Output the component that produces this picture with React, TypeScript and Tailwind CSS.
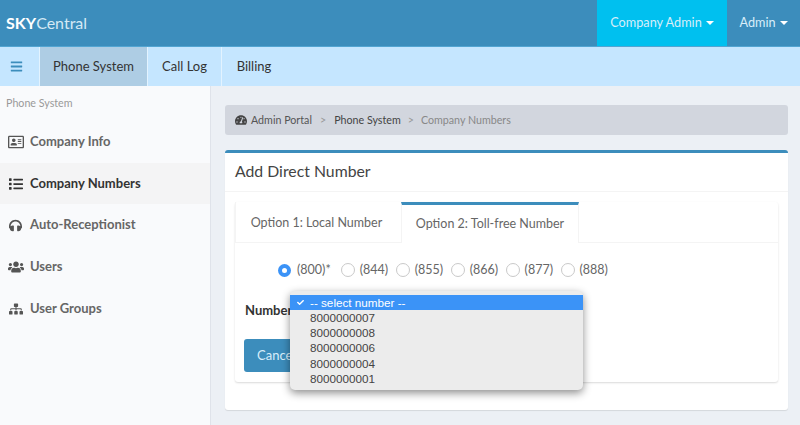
import { FaHeadphones, FaList, FaRegAddressCard, FaSitemap, FaTachometerAlt, FaUsers, FaBars, FaCheck } from "react-icons/fa"

const sideItems = [
  { label: "Company Info", icon: <FaRegAddressCard className="text-[16px]" /> },
  { label: "Company Numbers", icon: <FaList className="text-[14px]" />, active: true },
  { label: "Auto-Receptionist", icon: <FaHeadphones className="text-[13px]" /> },
  { label: "Users", icon: <FaUsers className="text-[16px]" /> },
  { label: "User Groups", icon: <FaSitemap className="text-[14px]" /> },
]

const codes = ["(800)*", "(844)", "(855)", "(866)", "(877)", "(888)"]
const numbers = ["8000000007", "8000000008", "8000000006", "8000000004", "8000000001"]

function Caret() {
  return <span className="ml-1 inline-block border-x-[4px] border-t-[4px] border-x-transparent border-t-white align-middle" />
}

export default function App() {
  return (
    <div className="flex h-[425px] w-[800px] flex-col overflow-hidden bg-[#ecf0f5] font-['Lato',sans-serif] text-[13px] text-[#444]">
      {/* Top bar */}
      <div className="flex h-[47px] shrink-0 items-stretch justify-between border-b border-[#52a5d2] bg-[#3c8dbc] text-[#d8eefa]">
        <div className="pl-[6px] pt-[12px] text-[16px] leading-[22px] text-[#d5e9f5]">
          <b className="text-white">SKY</b>Central
        </div>
        <div className="flex">
          <div className="flex w-[130px] items-center justify-center bg-[#00c0ef] pb-[1px] text-[12.7px]">
            Company Admin <Caret />
          </div>
          <div className="flex w-[73px] items-center justify-center pb-[1px] text-[12.7px]">
            Admin <Caret />
          </div>
        </div>
      </div>

      {/* Sub nav */}
      <div className="flex h-[39px] shrink-0 items-stretch bg-[#c5e6ff] text-[13px] text-[#333]">
        <div className="flex w-[40px] items-center justify-center border-r border-[#e3f3ff] pr-[6px] text-[#3c8dbc]">
          <FaBars className="text-[13px]" />
        </div>
        <div className="flex w-[108px] items-center justify-center border-r border-[#e3f3ff] bg-[#aecde4]">Phone System</div>
        <div className="flex w-[74px] items-center justify-center border-r border-[#e3f3ff]">Call Log</div>
        <div className="flex w-[64px] items-center justify-center">Billing</div>
      </div>

      <div className="flex min-h-0 flex-1">
        {/* Sidebar */}
        <div className="w-[211px] shrink-0 border-r border-[#dfe3ea] bg-[#f9fafc]">
          <div className="px-[6px] pb-[11px] pt-[9px] text-[10.7px] leading-[15px] text-[#999]">Phone System</div>
          {sideItems.map((item) => (
            <div
              key={item.label}
              className={`flex h-[41.7px] items-center text-[13px] font-bold ${item.active ? "bg-[#f4f4f5] text-[#333]" : "text-[#666]"}`}
            >
              <span className={`flex w-[30px] items-center justify-center pl-[1px] ${item.active ? "text-[#333]" : "text-[#555]"}`}>{item.icon}</span>
              {item.label}
            </div>
          ))}
        </div>

        {/* Main */}
        <div className="min-w-0 flex-1 pl-[14px] pr-[12px] pt-[19px]">
          <div className="flex h-[30px] items-center rounded-[3px] bg-[#d2d6de] px-[10px] text-[10.7px] text-[#555]">
            <FaTachometerAlt className="mr-[4px] text-[12px] text-[#444]" />
            Admin Portal
            <span className="mx-[8px] text-[#999]">&gt;</span>
            <span className="text-[#444]">Phone System</span>
            <span className="mx-[7px] text-[#999]">&gt;</span>
            <span className="text-[#888]">Company Numbers</span>
          </div>

          <div className="mt-[15px] h-[260px] rounded-[3px] border-t-[3px] border-[#3c8dbc] bg-white shadow-[0_1px_1px_rgba(0,0,0,0.1)]">
            <div className="border-b border-[#f4f4f4] px-[10px] pb-[10px] pt-[7px] text-[15.8px] leading-[21px] text-[#444]">Add Direct Number</div>

            <div className="mx-[10px] mt-[10px] h-[180px] rounded-[3px] bg-white shadow-[0_1px_2px_rgba(0,0,0,0.15)]">
              {/* Tabs */}
              <div className="flex h-[41px] items-stretch border-b border-[#f4f4f4] text-[12.5px] text-[#666]">
                <div className="flex w-[166px] items-center justify-center border-l border-[#f4f4f4] pr-[4px] pt-[3px]">Option 1: Local Number</div>
                <div className="-mb-px flex w-[178px] items-center justify-center border-x border-t-[3px] border-x-[#f4f4f4] border-t-[#3c8dbc] bg-white">Option 2: Toll-free Number</div>
              </div>

              <div className="relative">
                {/* Radios */}
                <div className="flex items-center pl-[43px] pt-[20px] text-[12.5px] leading-[14px] text-[#666]">
                  {codes.map((code, i) => (
                    <div key={code} className={`flex items-center ${i === 0 ? "mr-[10px]" : "mr-[7.5px]"}`}>
                      {i === 0 ? (
                        <span className="flex h-[13px] w-[13px] items-center justify-center rounded-full bg-[#3b93f7]">
                          <span className="h-[5px] w-[5px] rounded-full bg-white" />
                        </span>
                      ) : (
                        <span className="h-[14px] w-[14px] rounded-full border border-[#c9c9c9] bg-white" />
                      )}
                      <span className={i === 0 ? "ml-[6px]" : "ml-[5px]"}>{code}</span>
                    </div>
                  ))}
                </div>

                <div className="pl-[10px] pt-[25px] text-[13px] font-bold leading-[17px] text-[#333]">Number</div>

                <div className="ml-[9px] mt-[20px] flex h-[33px] w-[70px] items-center rounded-[3px] bg-[#3c8dbc] pl-[13px] text-[13px] text-[#d8eefa]">Cancel</div>

                {/* Open select menu */}
                <div className="absolute left-[55px] top-[48px] h-[99px] w-[293px] rounded-[5px] bg-[#ececec] pt-[4px] font-['Liberation_Sans',sans-serif] text-[11.7px] leading-[15.2px] text-[#444] shadow-[0_3px_9px_rgba(0,0,0,0.45)]">
                  <div className="flex h-[15px] items-center bg-[#3b93f7] text-white">
                    <span className="flex w-[20px] justify-center"><FaCheck className="text-[7px]" /></span>
                    -- select number --
                  </div>
                  {numbers.map((n) => (
                    <div key={n} className="pl-[20px]">{n}</div>
                  ))}
                </div>
              </div>
            </div>
          </div>
        </div>
      </div>
    </div>
  )
}
